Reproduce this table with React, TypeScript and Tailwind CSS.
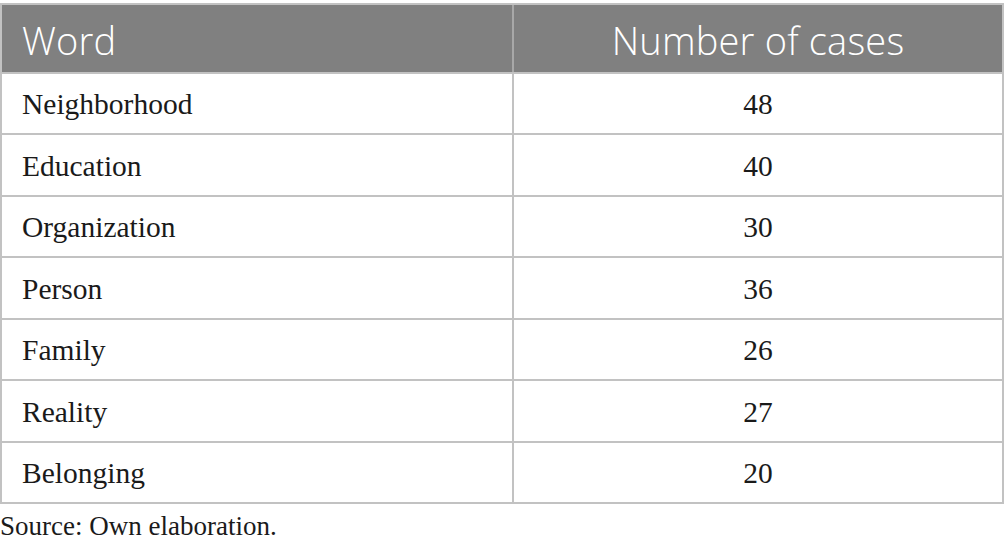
import React from "react";

const rows: [string, string, number][] = [
  ["Neighborhood", "48", 61],
  ["Education", "40", 62],
  ["Organization", "30", 61],
  ["Person", "36", 62],
  ["Family", "26", 61],
  ["Reality", "27", 62],
  ["Belonging", "20", 61],
];

export default function App() {
  return (
    <div className="w-[1005px] h-[555px] bg-white pt-[3px]">
      <div className="w-[1004px] border-t-2 border-l-2 border-r-2 border-[#c2c2c2]">
        <div className="grid grid-cols-[512px_1fr] h-[67px] bg-[#808080] text-white font-['Open_Sans',sans-serif] font-light text-[38px] tracking-[0.2px] leading-none">
          <div className="flex items-center pl-[20px] pt-[2px] border-r-2 border-[#a8a8a8]">Word</div>
          <div className="flex items-center justify-center pt-[2px]">Number of cases</div>
        </div>
        {rows.map(([w, n, h]) => (
          <div
            key={w}
            style={{ height: h }}
            className="grid grid-cols-[512px_1fr] border-t-2 border-[#c2c2c2] font-['Liberation_Serif',serif] text-[29.5px] text-[#1a1a1a] leading-none"
          >
            <div className="flex items-center pl-[20px] pt-[3px] border-r-2 border-[#c2c2c2]">{w}</div>
            <div className="flex items-center justify-center pt-[3px]">{n}</div>
          </div>
        ))}
        <div className="border-t-2 border-[#c2c2c2]" />
      </div>
      <div className="mt-[9px] font-['Liberation_Serif',serif] text-[27px] text-[#1a1a1a] leading-none">
        Source: Own elaboration.
      </div>
    </div>
  );
}
